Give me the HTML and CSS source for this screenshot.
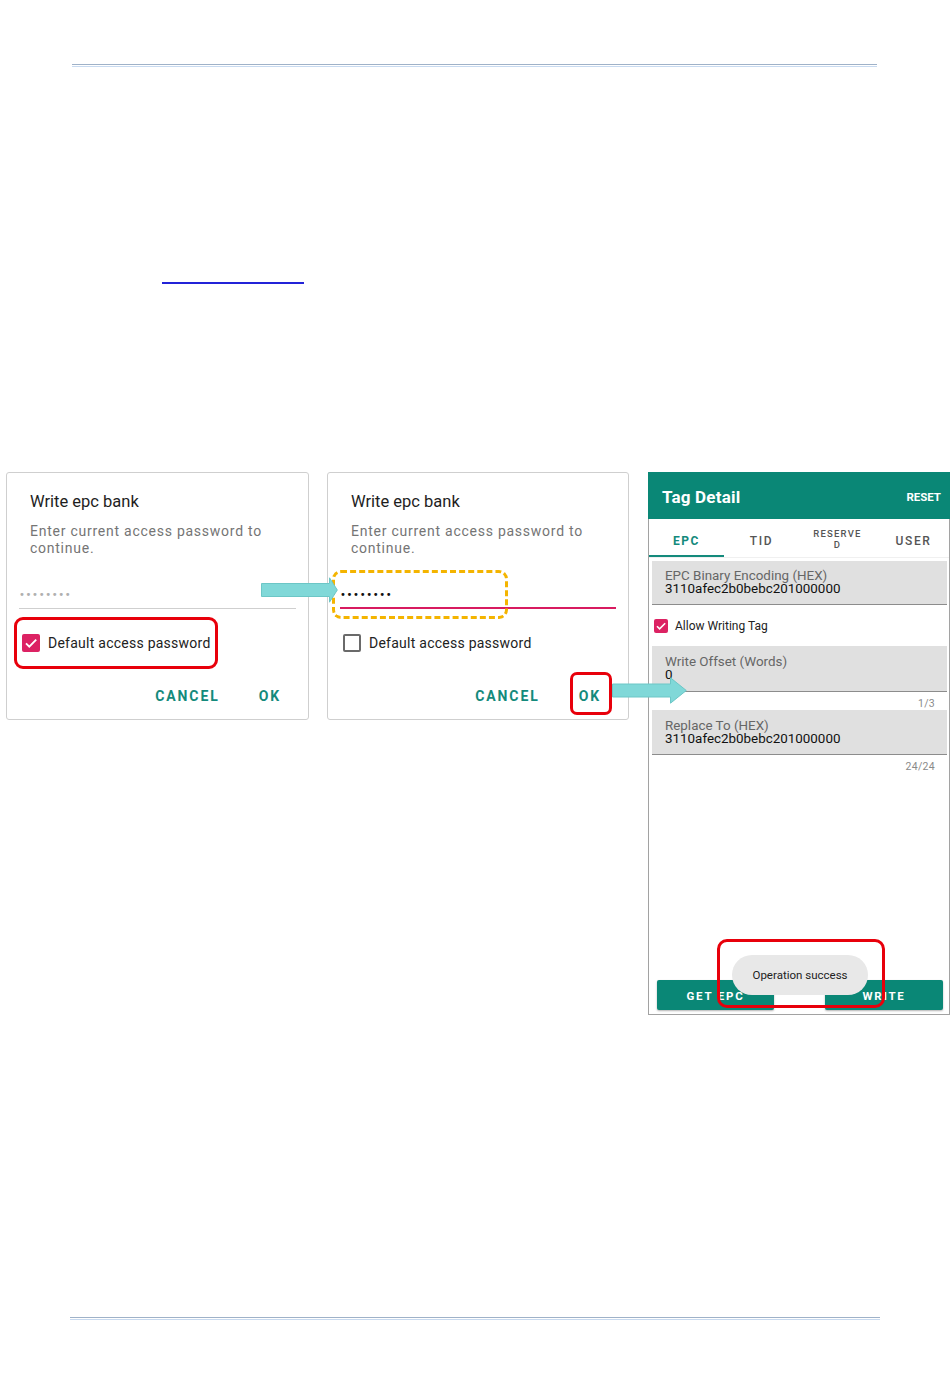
FILE: index.html
```html
<!DOCTYPE html>
<html lang="en">
<head>
<meta charset="utf-8">
<title>Write epc bank</title>
<link rel="stylesheet" href="styles.css">
</head>
<body>
<div class="page">
  <div class="rule rule-top"></div>
  <div class="link-line"></div>

  <div class="figs">
    <div class="dialog">
      <div class="d-title">Write epc bank</div>
      <div class="d-msg">Enter current access password to continue.</div>
      <div class="d-input"><span class="dots dots-hint">••••••••</span></div>
      <div class="d-check">
        <span class="cb cb-on"><svg viewBox="0 0 18 18" width="18" height="18"><path d="M4 9.3l3.3 3.3L14.2 5.7" fill="none" stroke="#fff" stroke-width="1.9"/></svg></span>
        <span class="cb-label">Default access password</span>
      </div>
      <div class="d-actions">
        <span class="btn-text">CANCEL</span>
        <span class="btn-text">OK</span>
      </div>
    </div>

    <div class="dialog">
      <div class="d-title">Write epc bank</div>
      <div class="d-msg">Enter current access password to continue.</div>
      <div class="d-input d-input-focus"><span class="dots">••••••••</span></div>
      <div class="d-check">
        <span class="cb cb-off"></span>
        <span class="cb-label">Default access password</span>
      </div>
      <div class="d-actions">
        <span class="btn-text">CANCEL</span>
        <span class="btn-text">OK</span>
      </div>
    </div>

    <div class="panel">
      <div class="p-header">
        <span class="p-title">Tag Detail</span>
        <span class="p-reset">RESET</span>
      </div>
      <div class="p-tabs">
        <div class="tab tab-active">EPC</div>
        <div class="tab">TID</div>
        <div class="tab tab-small">RESERVE<br>D</div>
        <div class="tab">USER</div>
      </div>
      <div class="field field-1">
        <div class="f-label">EPC Binary Encoding (HEX)</div>
        <div class="f-value">3110afec2b0bebc201000000</div>
      </div>
      <div class="p-check">
        <span class="cb-sm"><svg viewBox="0 0 14 14" width="14" height="14"><path d="M3 7.2l2.6 2.6L11.2 4.3" fill="none" stroke="#fff" stroke-width="1.6"/></svg></span>
        <span class="p-check-label">Allow Writing Tag</span>
      </div>
      <div class="field field-2">
        <div class="f-label">Write Offset (Words)</div>
        <div class="f-value">0</div>
      </div>
      <div class="counter">1/3</div>
      <div class="field field-3">
        <div class="f-label">Replace To (HEX)</div>
        <div class="f-value">3110afec2b0bebc201000000</div>
      </div>
      <div class="counter">24/24</div>
      <div class="p-spacer"></div>
      <div class="p-buttons">
        <span class="p-btn p-btn-left">GET EPC</span>
        <span class="p-btn p-btn-right">WRITE</span>
      </div>
      <div class="toast">Operation success</div>
    </div>

    <div class="mark mark-red mark-check"></div>
    <div class="mark mark-yellow"></div>
    <div class="mark mark-red mark-ok"></div>
    <div class="mark mark-red mark-toast"></div>

    <svg class="arrow arrow-1" viewBox="0 0 77 26" width="77" height="26">
      <path d="M0.5 6.5H68.5V0.8L76.3 13L68.5 25.2V19.5H0.5Z" fill="#80d8d8" stroke="#6cc6c6" stroke-width="1"/>
    </svg>
    <svg class="arrow arrow-2" viewBox="0 0 75 27" width="75" height="27">
      <path d="M0.5 7H58.5V0.8L74.3 13.5L58.5 26.2V20H0.5Z" fill="#80d8d8" stroke="#6cc6c6" stroke-width="1"/>
    </svg>
  </div>

  <div class="rule rule-bottom"></div>
</div>
</body>
</html>
```

FILE: styles.css
```css
* { box-sizing: border-box; }

html, body {
  margin: 0;
  padding: 0;
  background: #ffffff;
}

body {
  font-family: Roboto, "Noto Sans", "Liberation Sans", sans-serif;
  color: #222;
}

.page {
  width: 950px;
  padding-top: 64px;
}

.rule {
  height: 3px;
  border-top: 1px solid #9fb2c9;
  border-bottom: 1px solid #c8daf0;
}

.rule-top {
  margin-left: 72px;
  width: 805px;
}

.rule-bottom {
  margin-left: 70px;
  width: 810px;
  margin-top: 302px;
}

.link-line {
  margin-top: 215px;
  margin-left: 162px;
  width: 142px;
  height: 2px;
  background: #2323d8;
}

/* ---------- figures row ---------- */
.figs {
  position: relative;
  margin-top: 188px;
  display: flex;
  align-items: flex-start;
  padding-left: 6px;
}

.dialog {
  width: 303px;
  height: 248px;
  border: 1px solid #cfcfcf;
  border-radius: 3px;
  background: #fff;
  display: flex;
  flex-direction: column;
  flex-shrink: 0;
}

.dialog + .dialog {
  margin-left: 18px;
  width: 302px;
}

.d-title {
  padding: 19px 0 0 23px;
  font-size: 16.5px;
  line-height: 20px;
  color: #1e1e1e;
}

.d-msg {
  padding: 0 10px 0 23px;
  margin-top: 11px;
  font-size: 14px;
  line-height: 17px;
  letter-spacing: 0.75px;
  color: #757575;
}

.d-input {
  margin: 23px 12px 0 12px;
  height: 29px;
  border-bottom: 1px solid #cfcfcf;
  display: flex;
  align-items: center;
  padding-left: 0;
  padding-top: 2px;
}

.d-input-focus {
  border-bottom: 2px solid #d81b60;
  height: 29px;
  padding-top: 3px;
}

.dots {
  font-family: "DejaVu Sans", sans-serif;
  font-size: 10px;
  letter-spacing: 0.65px;
  line-height: 14px;
  color: #111;
}

.dots-hint {
  color: #b0b0b0;
}

.d-check {
  margin-top: 25px;
  padding-left: 15px;
  display: flex;
  align-items: center;
  height: 18px;
}

.cb {
  width: 18px;
  height: 18px;
  border-radius: 2px;
  flex-shrink: 0;
  display: flex;
}

.cb-on {
  background: #dc2263;
}

.cb-off {
  border: 2px solid #6a6a6a;
}

.cb-label {
  margin-left: 8px;
  font-size: 14px;
  color: #222;
  letter-spacing: 0.25px;
}

.d-actions {
  margin-top: 36px;
  display: flex;
  justify-content: flex-end;
  gap: 39px;
  padding-right: 27px;
}

.btn-text {
  font-size: 14px;
  font-weight: 700;
  letter-spacing: 1.9px;
  color: #148a7c;
  line-height: 16px;
}

/* ---------- tag detail panel ---------- */
.panel {
  position: relative;
  margin-left: 19px;
  width: 302px;
  height: 543px;
  border: 1px solid #a2a2a2;
  border-top: none;
  background: #fff;
  display: flex;
  flex-direction: column;
  flex-shrink: 0;
}

.p-header {
  height: 47px;
  background: #0a8776;
  display: flex;
  align-items: center;
  justify-content: space-between;
  padding: 2px 9px 0 14px;
  color: #fff;
  margin: 0 -1px;
}

.p-title {
  font-size: 17px;
  font-weight: 700;
  letter-spacing: 0.2px;
}

.p-reset {
  font-size: 11.5px;
  font-weight: 700;
}

.p-tabs {
  height: 39px;
  display: grid;
  grid-template-columns: repeat(4, 75px);
  border-bottom: 1px solid #f0f0f0;
}

.tab {
  display: flex;
  align-items: center;
  justify-content: center;
  font-size: 12px;
  font-weight: 500;
  letter-spacing: 1.6px;
  color: #555;
  padding-top: 5px;
  text-align: center;
}

.tab:last-child {
  padding-left: 4px;
}

.tab-active {
  color: #148a7c;
  font-weight: 700;
  border-bottom: 2px solid #148a7c;
  padding-top: 7px;
}

.tab-small {
  font-size: 9.5px;
  line-height: 11px;
  letter-spacing: 1.2px;
  padding-top: 1px;
  padding-left: 2px;
}

.field {
  margin: 3px 2px 0 3px;
  background: #e0e0e0;
  border-bottom: 1px solid #8c8c8c;
  padding: 8px 0 0 13px;
}

.field-1 {
  height: 44px;
}

.field-2 {
  margin-top: 0;
  height: 46px;
  padding-top: 9px;
}

.field-3 {
  margin-top: 0;
  height: 45px;
  padding-top: 9px;
}

.f-label {
  font-size: 13.4px;
  line-height: 13px;
  color: #666;
}

.f-value {
  font-size: 13.4px;
  line-height: 14px;
  color: #111;
}

.p-check {
  display: flex;
  align-items: center;
  height: 41px;
  padding-left: 5px;
  padding-top: 1px;
}

.cb-sm {
  width: 14px;
  height: 14px;
  border-radius: 2px;
  background: #dc2263;
  display: flex;
  flex-shrink: 0;
}

.p-check-label {
  margin-left: 7px;
  font-size: 12px;
  color: #222;
}

.counter {
  height: 18px;
  text-align: right;
  padding-right: 14px;
  font-size: 10.5px;
  line-height: 23px;
  color: #8a8a8a;
  letter-spacing: 0.3px;
}

.counter + .field {
  margin-top: 0;
}

.p-spacer {
  flex: 1;
}

.p-buttons {
  display: flex;
  justify-content: space-between;
  padding: 0 6px 4px 8px;
}

.p-btn {
  height: 30px;
  background: #0a8776;
  color: #fff;
  font-size: 11.5px;
  font-weight: 700;
  letter-spacing: 1.8px;
  display: flex;
  align-items: center;
  justify-content: center;
  border-radius: 2px;
  box-shadow: 0 1px 2px rgba(0, 0, 0, 0.3);
  padding-top: 1px;
}

.p-btn-left {
  width: 117px;
}

.p-btn-right {
  width: 118px;
}

.toast {
  position: absolute;
  left: 83px;
  top: 483px;
  width: 136px;
  height: 40px;
  border-radius: 20px;
  background: #e8e8e8;
  font-size: 11.5px;
  color: #222;
  display: flex;
  align-items: center;
  justify-content: center;
}

/* ---------- annotations ---------- */
.mark {
  position: absolute;
  border-radius: 9px;
  pointer-events: none;
}

.mark-red {
  border: 3px solid #e8000b;
}

.mark-check {
  left: 14px;
  top: 145px;
  width: 204px;
  height: 52px;
}

.mark-ok {
  left: 570px;
  top: 200px;
  width: 42px;
  height: 43px;
  border-radius: 7px;
}

.mark-toast {
  left: 717px;
  top: 467px;
  width: 168px;
  height: 69px;
  border-radius: 10px;
}

.mark-yellow {
  left: 332px;
  top: 98px;
  width: 176px;
  height: 49px;
  border: 3px dashed #f4b400;
}

.arrow {
  position: absolute;
}

.arrow-1 {
  left: 261px;
  top: 105px;
}

.arrow-2 {
  left: 612px;
  top: 205px;
}
```
